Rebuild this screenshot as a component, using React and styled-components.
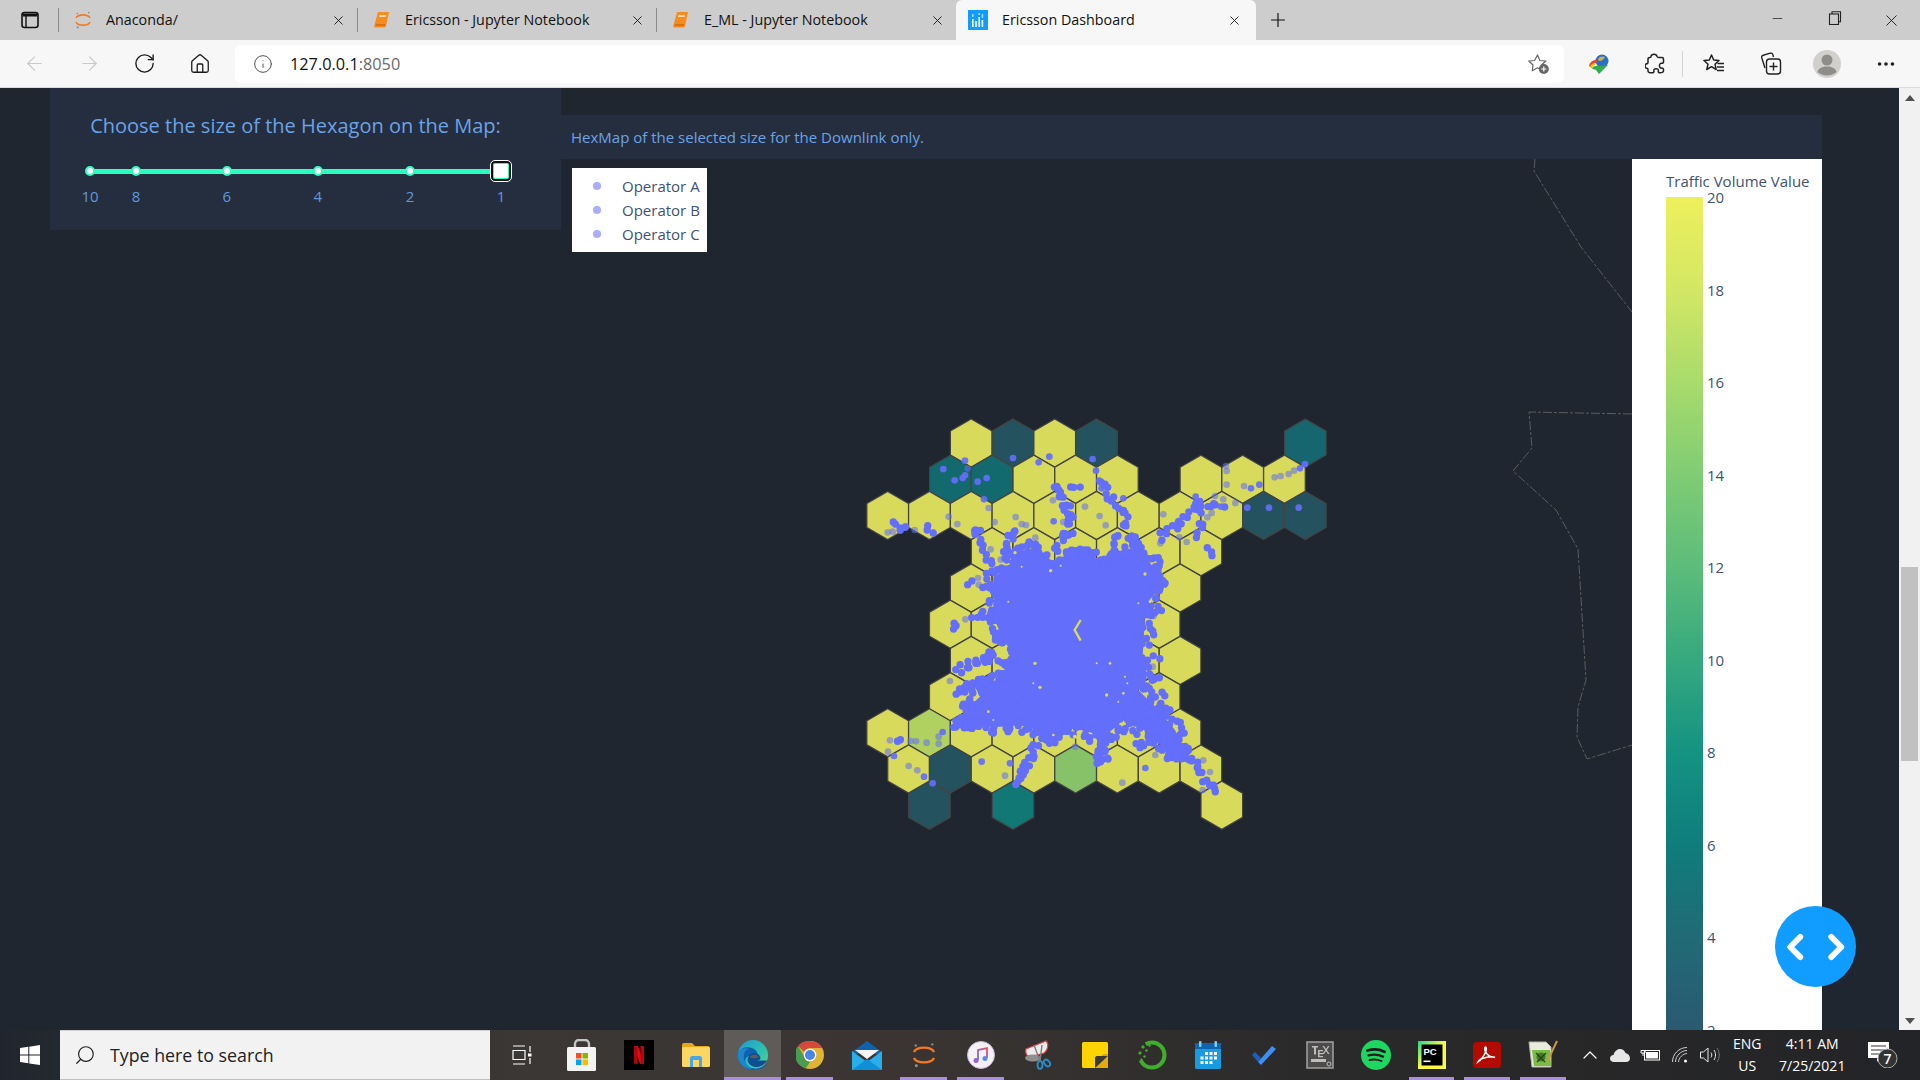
import React from "react"
import styled, { createGlobalStyle } from "styled-components"
import { ArrowLeft, ArrowRight, RotateCw, Home, Info, Plus, X, Minus, Search, ChevronUp, ChevronLeft, ChevronRight, MoreHorizontal } from "lucide-react"

const Global = createGlobalStyle`
  html, body {
    margin: 0;
    height: 100%;
    overflow: hidden;
    background: #1f2630;
  }
  * {
    box-sizing: border-box;
  }
`

const Screen = styled.div`
  width: 1920px;
  height: 1080px;
  display: flex;
  flex-direction: column;
  font-family: "Open Sans", sans-serif;
`

/* browser chrome */
const TabBar = styled.div`
  height: 40px;
  flex: none;
  display: flex;
  align-items: center;
  background: #cdcdcd;
  color: #111;
  font-size: 14.3px;
`
const SideToggle = styled.div`
  width: 59px;
  height: 24px;
  padding-left: 2px;
  display: flex;
  align-items: center;
  justify-content: center;
  border-right: 1px solid #8b8b8b;
`
const Tab = styled.div`
  width: ${(p) => (p.$active ? "300px" : "299px")};
  height: ${(p) => (p.$active ? "40px" : "24px")};
  padding: 0 ${(p) => (p.$active ? "14px" : "11px")} 0 ${(p) => (p.$active ? "12px" : "15px")};
  display: flex;
  align-items: center;
  gap: 14px;
  background: ${(p) => (p.$active ? "#f7f7f7" : "transparent")};
  border-right: ${(p) => (p.$last || p.$active ? "none" : "1px solid #8b8b8b")};
  border-radius: ${(p) => (p.$active ? "6px 6px 0 0" : "0")};
  span {
    flex: 1;
    white-space: nowrap;
    position: relative;
    top: -1px;
  }
`
const NewTab = styled.div`
  width: 44px;
  display: flex;
  justify-content: center;
`
const WindowButtons = styled.div`
  margin-left: auto;
  display: flex;
`
const WindowButton = styled.div`
  width: 57px;
  display: flex;
  justify-content: center;
`
const Toolbar = styled.div`
  height: 48px;
  flex: none;
  display: flex;
  align-items: center;
  background: #f7f7f7;
  border-bottom: 1px solid #dcdcdc;
  padding-left: 7px;
`
const NavButton = styled.div`
  width: 55px;
  display: flex;
  justify-content: center;
  color: ${(p) => (p.$off ? "#c9c9c9" : "#1a1a1a")};
`
const AddressBar = styled.div`
  width: 1329px;
  height: 38px;
  margin-left: 8px;
  padding: 0 14px 0 18px;
  display: flex;
  align-items: center;
  gap: 17px;
  background: #fff;
  border-radius: 6px;
  font-size: 16.3px;
  color: #111;
  i {
    font-style: normal;
    color: #6b6b6b;
  }
  svg:last-child {
    margin-left: auto;
  }
`
const ToolIcons = styled.div`
  display: flex;
  align-items: center;
  margin-left: 6px;
`
const ToolIcon = styled.div`
  width: ${(p) => p.$w || 57}px;
  display: flex;
  justify-content: center;
  align-items: center;
`
const ToolDivider = styled.div`
  width: 1px;
  height: 26px;
  background: #d4d4d4;
`

/* page */
const Viewport = styled.div`
  flex: 1;
  min-height: 0;
  display: flex;
  overflow: hidden;
  background: #1f2630;
`
const Page = styled.div`
  flex: 1;
  min-width: 0;
  display: flex;
  align-items: flex-start;
  padding-left: 50px;
`
const SliderCard = styled.section`
  width: 511px;
  height: 142px;
  flex: none;
  padding: 23px 60px 0 40px;
  background: #252e3f;
  color: #6ba3e6;
`
const SliderTitle = styled.h3`
  margin: 0;
  font-size: 20px;
  font-weight: 400;
  line-height: 30px;
  white-space: nowrap;
  text-align: center;
`
const Slider = styled.div`
  position: relative;
  height: 5px;
  margin-top: 28px;
  background: #2bffc0;
`
const SliderDot = styled.div`
  position: absolute;
  top: -3px;
  left: ${(p) => p.$at}%;
  width: 10px;
  height: 10px;
  margin-left: -5px;
  background: #fff;
  border: 2px solid #2bffc0;
  border-radius: 50%;
`
const SliderHandle = styled.div`
  position: absolute;
  top: -8px;
  right: -10px;
  width: 20px;
  height: 20px;
  background: #fff;
  border: 2px solid #111;
  outline: 1px solid #fff;
  border-radius: 4px;
  box-shadow: inset 0 0 0 1px #2bffc0;
`
const SliderMark = styled.div`
  position: absolute;
  top: 17px;
  left: ${(p) => p.$at}%;
  transform: translateX(-50%);
  font-size: 15px;
  line-height: 20px;
  color: #5f98da;
`
const MapColumn = styled.main`
  width: 1261px;
  height: 100%;
  flex: none;
  display: flex;
  flex-direction: column;
  padding-top: 27px;
`
const Banner = styled.div`
  height: 44px;
  flex: none;
  display: flex;
  align-items: center;
  padding-left: 10px;
  background: #252e3f;
  color: #6ba3e6;
  font-size: 15px;
`
const Plot = styled.div`
  position: relative;
  flex: 1;
  min-height: 0;
  display: flex;
`
const MapSvg = styled.svg`
  flex: 1;
  min-width: 0;
  height: 100%;
  display: block;
`
const Legend = styled.div`
  position: absolute;
  left: 11px;
  top: 9px;
  width: 135px;
  height: 84px;
  padding-top: 6px;
  background: #fff;
  color: #3f5273;
  font-size: 15px;
`
const LegendRow = styled.div`
  height: 24px;
  display: flex;
  align-items: center;
  padding-left: 21px;
  gap: 21px;
  &::before {
    content: "";
    width: 8px;
    height: 8px;
    border-radius: 50%;
    background: #a8aefc;
  }
`
const ColorBarPanel = styled.aside`
  width: 190px;
  flex: none;
  padding: 12px 0 0 34px;
  background: #fff;
  color: #3f5273;
  font-size: 15px;
`
const ColorTitle = styled.div`
  line-height: 20px;
  white-space: nowrap;
  margin-bottom: 6px;
`
const ColorBody = styled.div`
  display: flex;
  gap: 4px;
`
const ColorRamp = styled.div`
  width: 37px;
  height: 925px;
  flex: none;
  background: linear-gradient(180deg, #edf05c 0%, #d3e764 10%, #a8db6c 20%, #80cc74 30%, #5cbc7a 40%, #36a97f 50%, #149382 60%, #0f7d7c 70%, #216a76 80%, #2a5a70 90%, #2f4f6b 100%);
`
const Ticks = styled.div`
  display: flex;
  flex-direction: column;
  margin-top: -10px;
  div {
    height: 92.5px;
    line-height: 20px;
  }
`
const CodeButton = styled.button`
  position: absolute;
  right: -34px;
  bottom: 43px;
  width: 81px;
  height: 81px;
  display: flex;
  align-items: center;
  justify-content: center;
  padding: 0;
  border: none;
  border-radius: 50%;
  background: #119dff;
  color: #fff;
`
const ScrollTrack = styled.div`
  position: relative;
  width: 21px;
  flex: none;
  background: #f1f1f1;
`
const ScrollArrow = styled.div`
  position: absolute;
  left: 6px;
  ${(p) => (p.$down ? "bottom: 6px;" : "top: 7px;")}
  width: 0;
  height: 0;
  border-left: 5px solid transparent;
  border-right: 5px solid transparent;
  ${(p) => (p.$down ? "border-top: 6px solid #505050;" : "border-bottom: 6px solid #505050;")}
`
const ScrollThumb = styled.div`
  position: absolute;
  top: 479px;
  left: 2px;
  width: 17px;
  height: 194px;
  background: #c1c1c1;
`

/* taskbar */
const Taskbar = styled.footer`
  height: 50px;
  flex: none;
  display: flex;
  color: #fff;
  background: linear-gradient(90deg, #21262e 0, #3b3734 520px, #3a3533 900px, #2b2a2a 1300px, #232427 1920px);
`
const StartButton = styled.div`
  width: 60px;
  display: flex;
  align-items: center;
  justify-content: center;
`
const SearchBox = styled.div`
  width: 430px;
  display: flex;
  align-items: center;
  gap: 14px;
  padding-left: 14px;
  background: #f2f2f2;
  border-top: 1px solid #d0d0d0;
  border-bottom: 1px solid #c0c0c0;
  color: #222;
  font-size: 17.8px;
`
const TaskView = styled.div`
  width: 63px;
  display: flex;
  align-items: center;
  justify-content: center;
`
const AppStrip = styled.div`
  display: flex;
`
const AppSlot = styled.div`
  position: relative;
  width: ${(p) => (p.$narrow ? 55.9 : 57)}px;
  display: flex;
  align-items: center;
  justify-content: center;
  background: ${(p) => (p.$active ? "#5f5b59" : "transparent")};
  &::after {
    content: "";
    display: ${(p) => (p.$open ? "block" : "none")};
    position: absolute;
    bottom: 0;
    left: ${(p) => (p.$active ? 0 : 5)}px;
    right: ${(p) => (p.$active ? 0 : 5)}px;
    height: 3px;
    background: #a98fdc;
  }
`
const Tray = styled.div`
  margin-left: 4px;
  display: flex;
  align-items: stretch;
  flex: 1;
`
const TrayIcon = styled.div`
  width: 30px;
  display: flex;
  align-items: center;
  justify-content: center;
`
const TrayText = styled.div`
  width: ${(p) => p.$w}px;
  display: flex;
  flex-direction: column;
  align-items: center;
  justify-content: center;
  gap: 4px;
  font-size: 14px;
  line-height: 18px;
  white-space: nowrap;
`
const Notify = styled.div`
  flex: 1;
  display: flex;
  align-items: center;
  padding-left: 13px;
`

/* map data, in reference pixels of the crop at 3x */
const HEX_FILL = { y: "#d8da5b", d: "#24525f", t: "#126a6e", u: "#15666e", l: "#b0d060", g: "#88c268", v: "#127876" }
const HEX_ROWS = [
  "4y 6d 8y 10d 20u",
  "3t 5t 7y 9y 11y 15y 17y 19y",
  "0y 2y 4y 6y 8y 10y 12y 14y 16y 18d 20d",
  "5y 7y 9y 11y 13y 15y",
  "4y 6y 8y 10y 12y 14y",
  "3y 5y 7y 9y 11y 13y",
  "4y 6y 8y 10y 12y 14y",
  "3y 5y 7y 9y 11y 13y",
  "0y 2l 4y 6y 8y 10y 12y 14y",
  "1y 3d 5y 7y 9g 11y 13y 15y",
  "2d 6v 16y",
]

const hexPoints = (cx, cy, r = 72) =>
  [0, 60, 120, 180, 240, 300]
    .map((a) => {
      const t = ((a - 90) * Math.PI) / 180
      return `${(cx + r * Math.cos(t)).toFixed(1)},${(cy + r * Math.sin(t)).toFixed(1)}`
    })
    .join(" ")

const HEXES = HEX_ROWS.flatMap((row, i) =>
  row.split(" ").map((h) => ({
    x: 143 + 62.65 * parseInt(h, 10),
    y: 129 + 108.7 * i,
    fill: HEX_FILL[h.slice(-1)],
  }))
)

const BLOB = [
  [460, 530], [505, 505], [525, 445], [565, 455], [610, 475], [660, 485], [700, 460], [760, 475], [820, 475], [870, 445],
  [920, 475], [950, 515], [960, 565], [920, 610], [912, 700], [908, 770], [920, 830], [895, 870], [955, 930], [1005, 990],
  [1035, 1050], [990, 1070], [930, 1000], [850, 960], [805, 1000], [790, 1055], [760, 1000], [700, 985], [640, 1025],
  [590, 995], [560, 975], [480, 980], [350, 980], [375, 930], [420, 890], [405, 860], [500, 830], [525, 770], [490, 720],
  [460, 650], [460, 580],
]

// thin arms of dots that run out of the main mass
const ARMS = [
  [650, 255, 690, 350, 14], [690, 350, 670, 420, 8], [780, 240, 850, 345, 12], [850, 345, 880, 430, 9], [700, 270, 720, 265, 3],
  [520, 385, 490, 480, 14], [410, 395, 465, 520, 12], [575, 430, 620, 490, 12], [1090, 320, 960, 410, 16], [1070, 295, 1065, 320, 3],
  [1145, 320, 1085, 325, 7], [1090, 365, 1070, 405, 5], [880, 420, 920, 480, 12], [830, 400, 825, 470, 8], [945, 480, 970, 560, 8],
  [1125, 1178, 1030, 1050, 18], [535, 1150, 575, 1060, 14], [575, 1060, 620, 1000, 7], [350, 880, 450, 830, 16], [350, 810, 460, 770, 16],
  [395, 650, 470, 635, 8], [780, 1085, 790, 1000, 10], [760, 1080, 810, 1070, 5], [890, 1045, 940, 1010, 7], [340, 980, 420, 975, 8],
  [960, 625, 910, 640, 6], [955, 782, 925, 770, 3], [960, 830, 930, 850, 3], [970, 895, 930, 860, 4], [985, 930, 950, 910, 3],
  [1040, 1050, 985, 1085, 8], [450, 750, 440, 790, 6], [660, 410, 690, 400, 4], [700, 460, 720, 480, 3], [270, 390, 262, 385, 3],
  [180, 385, 195, 392, 3], [157, 366, 170, 362, 2], [400, 400, 420, 392, 3], [1105, 445, 1105, 462, 3], [335, 680, 352, 675, 3],
  [378, 547, 390, 547, 2], [430, 565, 445, 560, 2], [465, 710, 475, 710, 2], [945, 695, 945, 695, 2], [175, 1028, 182, 1026, 2],
  [640, 440, 720, 470, 8], [760, 470, 800, 480, 4], [860, 450, 900, 500, 6], [950, 520, 965, 540, 3], [450, 930, 560, 900, 12],
  [480, 780, 540, 800, 8], [850, 1000, 930, 960, 6],
]

// single dots, strong ones and the faint ones over a hex
const STRAY_SOLID = [
  [375, 182], [519, 174], [596, 187], [628, 170], [758, 177], [432, 298], [850, 295], [1258, 254], [1395, 192], [1380, 205], [1143, 320],
  [310, 207], [344, 241], [368, 234], [375, 226], [413, 245], [440, 234], [1287, 323], [1376, 323], [1222, 323], [1233, 265], [308, 996],
  [162, 1068], [252, 1130], [278, 1150], [425, 1085], [510, 1090], [916, 1104], [768, 212], [778, 242], [785, 265], [1067, 290], [641, 364],
]
const STRAY_FAINT = [
  [383, 205], [446, 324], [326, 350], [352, 372], [143, 397], [158, 395], [197, 378], [224, 390], [527, 351], [464, 366], [545, 372], [558, 375],
  [639, 301], [670, 366], [735, 320], [779, 348], [797, 376], [970, 343], [1102, 352], [1115, 339], [1186, 309], [1160, 254], [1160, 213], [1158, 198],
  [1212, 258], [1304, 232], [1322, 228], [1346, 222], [1362, 212], [1150, 298], [1125, 288], [1040, 426], [1018, 412], [961, 430], [586, 413],
  [452, 448], [428, 443], [482, 479], [414, 534], [416, 554], [376, 658], [150, 1021], [144, 1055], [212, 1023], [228, 1024], [260, 1028], [296, 1010],
  [296, 1031], [206, 1098], [232, 1111], [495, 1127], [847, 1148], [946, 1065], [1090, 1081], [1110, 1116], [1088, 1170], [330, 843], [545, 864],
  [938, 800], [941, 648], [706, 1040],
]

// bits of hex that still show through the mass of dots
const GAPS = [
  [525, 458, 5], [632, 512, 5], [662, 497, 3], [915, 522, 5], [505, 605, 3], [600, 862, 5], [580, 850, 3], [445, 935, 4], [850, 880, 4],
  [835, 905, 3], [862, 850, 3], [770, 790, 3], [810, 790, 4], [585, 790, 5], [800, 885, 5], [855, 830, 3], [460, 960, 3], [640, 1005, 4],
  [705, 1010, 6], [930, 605, 4], [895, 610, 3], [490, 770, 4], [545, 500, 3],
]

const seeded = (seed) => () => {
  seed = (seed * 16807) % 2147483647
  return seed / 2147483647
}

const buildDots = () => {
  const rnd = seeded(4711)
  const dots = []
  BLOB.forEach(([x, y], i) => {
    const [nx, ny] = BLOB[(i + 1) % BLOB.length]
    const steps = Math.ceil(Math.hypot(nx - x, ny - y) / 8)
    for (let s = 0; s < steps; s++) {
      const t = s / steps
      dots.push([x + (nx - x) * t + (rnd() - 0.5) * 42, y + (ny - y) * t + (rnd() - 0.5) * 42])
    }
  })
  ARMS.forEach(([x, y, nx, ny, n]) => {
    for (let s = 0; s < n; s++) {
      const t = n > 1 ? s / (n - 1) : 0
      dots.push([x + (nx - x) * t + (rnd() - 0.5) * 22, y + (ny - y) * t + (rnd() - 0.5) * 22])
    }
  })
  return dots
}
const DOTS = buildDots()
const BLOB_PATH = BLOB.map(([x, y]) => `${x},${y}`).join(" ")

const HexMap = () => (
  <MapSvg viewBox="561 159 1071 871" preserveAspectRatio="xMinYMin slice">
    <g fill="none" stroke="#5c5c5c" strokeWidth="1" strokeDasharray="9 2 3 2">
      <path d="M1535 159L1534 171L1581 247L1632 312" />
      <path d="M1632 414L1529 412L1532 448L1513 471L1556 510L1578 549L1586 680L1578 707L1577 737L1587 759L1632 745" />
    </g>
    <g transform="translate(840 400) scale(0.33333)">
      <g stroke="#444" strokeWidth="3.5">
        {HEXES.map((h) => (
          <polygon key={`${h.x}-${h.y}`} points={hexPoints(h.x, h.y)} fill={h.fill} />
        ))}
      </g>
      <g fill="#636efa">
        <polygon points={BLOB_PATH} />
        {DOTS.map(([x, y], i) => (
          <circle key={i} cx={x} cy={y} r="11" />
        ))}
        {STRAY_SOLID.map(([x, y]) => (
          <circle key={`${x}-${y}`} cx={x} cy={y} r="10" opacity="0.92" />
        ))}
        {STRAY_FAINT.map(([x, y]) => (
          <circle key={`${x}-${y}`} cx={x} cy={y} r="10" opacity="0.55" />
        ))}
      </g>
      <path d="M722 660L704 690L722 722" fill="none" stroke="#d8da5b" strokeWidth="7" />
      <g fill="#d8da5b">
        {GAPS.map(([x, y, r]) => (
          <circle key={`${x}-${y}`} cx={x} cy={y} r={r} />
        ))}
      </g>
    </g>
  </MapSvg>
)

/* icons */
const SidebarIcon = () => (
  <svg width="18" height="18" viewBox="0 0 18 18">
    <rect x="1" y="1.5" width="16" height="15" rx="2.5" fill="none" stroke="#111" strokeWidth="1.6" />
    <path d="M2 2.5h14v3H2z" fill="#111" />
    <path d="M5 5v11" stroke="#111" strokeWidth="1.4" />
  </svg>
)
const AnacondaIcon = ({ size = 22 }) => (
  <svg width={size} height={size} viewBox="0 0 22 22" fill="none">
    <path d="M2.5 8.5C5 3.5 17 3.5 19.5 8.5" stroke="#f47a20" strokeWidth="2" />
    <path d="M2.5 13.5C5 18.5 17 18.5 19.5 13.5" stroke="#f47a20" strokeWidth="2" />
    <circle cx="4" cy="3" r="1" fill="#8b8b8b" />
    <circle cx="18" cy="2" r="1" fill="#8b8b8b" />
    <circle cx="4.5" cy="20" r="1.3" fill="#8b8b8b" />
  </svg>
)
const NotebookIcon = () => (
  <svg width="18" height="18" viewBox="0 0 18 18">
    <path d="M5 1h11l-3 14c-.2.8-.8 1.5-1.8 1.5H2.5C1.5 16.5 1 15.8 1.2 15z" fill="#f78c1e" />
    <path d="M6.5 4h6.5l-.5 2H6z" fill="#ffd9a8" />
    <path d="M2.8 14h9.5" stroke="#b65a06" strokeWidth="1" />
  </svg>
)
const DashIcon = () => (
  <svg width="20" height="20" viewBox="0 0 20 20">
    <rect width="20" height="20" fill="#119dff" />
    <g fill="#fff">
      <rect x="4" y="9" width="1.6" height="8" />
      <rect x="7.2" y="11" width="1.6" height="6" />
      <rect x="10.4" y="7" width="1.6" height="10" />
      <rect x="13.6" y="10" width="1.6" height="7" />
      <rect x="4" y="4" width="1.6" height="3" opacity=".6" />
      <rect x="10.4" y="3" width="1.6" height="2" opacity=".6" />
      <rect x="13.6" y="4" width="1.6" height="4" opacity=".6" />
    </g>
  </svg>
)
const RestoreIcon = () => (
  <svg width="14" height="14" viewBox="0 0 14 14" fill="none" stroke="#222" strokeWidth="1.1">
    <rect x="1.5" y="3" width="9" height="10.5" />
    <path d="M4 3V.7h8.5v10H10.5" />
  </svg>
)
const StarAddIcon = () => (
  <svg width="22" height="22" viewBox="0 0 22 22" fill="none">
    <path d="M9.5 2l2.4 5.500 6 .5-4.500 4 1.300 5.800-5.200-3-5.200 3L5 12 .8 8l5.800-.5z" stroke="#666" strokeWidth="1.2" strokeLinejoin="round" />
    <circle cx="15.8" cy="16" r="5" fill="#666" />
    <path d="M13.3 16h5M15.8 13.5v5" stroke="#fff" strokeWidth="1.2" />
  </svg>
)
const IdmIcon = () => (
  <svg width="22" height="22" viewBox="0 0 22 22">
    <circle cx="14" cy="8" r="6.5" fill="#2a6fc4" />
    <path d="M10 6c2-3 5-3 7-2-1 2-3 4-6 4z" fill="#d9b23a" />
    <path d="M1 13c1-5 6-7 9-6l-2 3c-2 0-4 2-4 5z" fill="#e44a2c" />
    <path d="M2 14c1-3 3-4 6-4l-1 2c-1 0-2 1-2 3z" fill="#f5c518" />
    <path d="M4 16c1-3 4-4 8-3l8-1-5 5-4 4-3-4c-2-1-3-1-4-1z" fill="#34a853" />
  </svg>
)
const PuzzleIcon = () => (
  <svg width="20" height="22" viewBox="0 0 20 22" fill="none" stroke="#222" strokeWidth="1.5" strokeLinejoin="round">
    <path d="M6 3.5c.5-3 5.500-3 6 0 .1.800 1 1 2 1h3c1 0 1.500.5 1.500 1.500v3c0 1-1 1.500-1.800 1.300-3-.6-3 5.400 0 4.800.8-.2 1.800.3 1.800 1.300V18c0 1-2 2-4 1.700-1-.2-1.500-1-1.200-1.800.8-3-5.200-3-4.400 0 .3.800-.2 1.600-1.200 1.800C6 20 3 20 3 18v-1.500c0-1-1-1.500-1.800-1.300-1.500-1-1.500-3.400 0-4.400.8.200 1.800-.3 1.800-1.300V6c0-1 1-1.500 2-1.500.5 0 1-.3 1-1z" />
  </svg>
)
const FavoritesIcon = () => (
  <svg width="22" height="22" viewBox="0 0 22 22" fill="none" stroke="#222" strokeWidth="1.5" strokeLinejoin="round">
    <path d="M8.5 2l2.200 5 5.300.5-4 3.700 1.200 5.300-4.700-2.800-4.700 2.800 1.200-5.300-4-3.700 5.300-.5z" />
    <path d="M14.5 10.5h6.500M14 14h7M14 17.5h7" />
  </svg>
)
const CollectionsIcon = () => (
  <svg width="22" height="24" viewBox="0 0 22 24" fill="none" stroke="#222" strokeWidth="1.4">
    <path d="M5 16L1.800 6C1.400 4.600 2 3.500 3.200 3.200l7-2c1.200-.3 2.300.2 2.700 1.400L13.500 5" />
    <rect x="6.5" y="7" width="14" height="15" rx="3" />
    <path d="M13.5 10.5v8M9.5 14.5h8" />
  </svg>
)
const AvatarIcon = () => (
  <svg width="28" height="28" viewBox="0 0 28 28">
    <circle cx="14" cy="14" r="14" fill="#d2d0cd" />
    <circle cx="14" cy="10" r="5.5" fill="#8f8d8a" />
    <path d="M4.5 22c1-4 5-5.500 9.500-5.500s8.500 1.500 9.500 5.500c-5 4.500-14 4.500-19 0z" fill="#8f8d8a" />
  </svg>
)
const WindowsLogo = () => (
  <svg width="20" height="20" viewBox="0 0 20 20" fill="#fff">
    <path d="M0 3l8.300-1.200v7.700H0zM9.300 1.700L20 0v9.500H9.300zM0 10.500h8.300v7.700L0 17zM9.300 10.500H20V20L9.300 18.400z" />
  </svg>
)
const TaskViewIcon = () => (
  <svg width="20" height="20" viewBox="0 0 20 20" fill="none" stroke="#fff" strokeWidth="1.2">
    <path d="M1 1h12M1 19h12M1 5.500h12v9H1zM18 1v6M18 13v6" />
    <rect x="16" y="8.5" width="3.5" height="3" fill="#fff" stroke="none" />
  </svg>
)
const StoreIcon = () => (
  <svg width="30" height="32" viewBox="0 0 30 32">
    <path d="M8 9V5c0-2 1.500-4 4-4h6c2.500 0 4 2 4 4v4" fill="none" stroke="#c4c4c4" strokeWidth="2.4" />
    <rect y="8" width="29" height="24" rx="1.5" fill="#f3f3f3" />
    <rect x="9" y="14" width="5.5" height="5.5" fill="#f25022" />
    <rect x="15.5" y="14" width="5.5" height="5.5" fill="#7fba00" />
    <rect x="9" y="20.5" width="5.5" height="5.5" fill="#00a4ef" />
    <rect x="15.5" y="20.5" width="5.5" height="5.5" fill="#ffb900" />
  </svg>
)
const NetflixIcon = () => (
  <svg width="30" height="30" viewBox="0 0 30 30">
    <rect width="30" height="30" fill="#000" />
    <path d="M10 6h4l6 18h-4z" fill="#e50914" />
    <path d="M10 6h3.500v18l-3.500-.4zM16.500 6H20v18.400l-3.500-.6z" fill="#b1060f" />
  </svg>
)
const ExplorerIcon = () => (
  <svg width="28" height="24" viewBox="0 0 28 24">
    <path d="M0 2c0-1 .6-2 2-2h8l3 3h13c1 0 2 1 2 2v4H0z" fill="#e6a819" />
    <rect y="4" width="28" height="20" rx="1.5" fill="#fbd663" />
    <path d="M8 24v-9c0-1 .8-2 2-2h8c1.200 0 2 1 2 2v9h-3v-7h-6v7z" fill="#4aa5e6" />
  </svg>
)
const EdgeIcon = () => (
  <svg width="30" height="30" viewBox="0 0 30 30">
    <defs>
      <linearGradient id="edgeTop" x1="0" y1="0" x2="1" y2="1">
        <stop offset="0" stopColor="#1a9ad6" />
        <stop offset="0.7" stopColor="#35c9a5" />
        <stop offset="1" stopColor="#6fe05c" />
      </linearGradient>
    </defs>
    <circle cx="15" cy="15" r="15" fill="url(#edgeTop)" />
    <path d="M0 15C1 8 8 6 14 8c5 2 7 6 4 9-3 2-7 1-7-1-5 1-5 8 0 11 5 2.500 12 2 18-3-3 5-8 6-14 6C6 30 0 23 0 15z" fill="#0d62ab" />
    <path d="M11 16c2-4 9-4 11 .5 1 2 0 4-3 4h10c-2 4-8 8-14 6-5-2-7-7-4-10.500z" fill="#0f4e92" />
    <path d="M12 17c2-3 7-3 9 0-2 1-7 2-9 0z" fill="#5f5b59" />
    <path d="M0 15c0-6 7-8 11-6-4 1-6 5-5 10 1 4 4 7 8 10C6 29 0 23 0 15z" fill="#1b87d0" />
  </svg>
)
const ChromeIcon = () => (
  <svg width="28" height="28" viewBox="0 0 28 28">
    <circle cx="14" cy="14" r="14" fill="#e0b332" />
    <path d="M14 0a14 14 0 0 1 12.100 7H14a7 7 0 0 0-6.100 3.500L2 4.900A14 14 0 0 1 14 0z" fill="#d5493c" />
    <path d="M2 4.900l5.900 10.200A7 7 0 0 0 14 21l-4.200 6.300A14 14 0 0 1 2 4.900z" fill="#4a9c52" />
    <circle cx="14" cy="14" r="6.3" fill="#fff" />
    <circle cx="14" cy="14" r="5" fill="#4a86e8" />
  </svg>
)
const MailIcon = () => (
  <svg width="30" height="29" viewBox="0 0 30 29">
    <path d="M0 11L15 0l15 11v2H0z" fill="#0f62ae" />
    <path d="M3 9h24l-12 9z" fill="#f4f4f4" />
    <path d="M0 10l15 11 15-11v19H0z" fill="#28afea" />
    <path d="M0 29l15-11 15 11z" fill="#0f8fd8" />
  </svg>
)
const MusicIcon = () => (
  <svg width="28" height="28" viewBox="0 0 28 28">
    <defs>
      <linearGradient id="musicNote" x1="1" y1="0" x2="0" y2="1">
        <stop offset="0" stopColor="#f3496c" />
        <stop offset="1" stopColor="#5f7ae0" />
      </linearGradient>
    </defs>
    <circle cx="14" cy="14" r="13.5" fill="#f4f0f4" stroke="#c9b7d6" />
    <path d="M11 19V9l9-2v10" fill="none" stroke="url(#musicNote)" strokeWidth="1.8" />
    <circle cx="9" cy="19.5" r="2.5" fill="#9a5fd0" />
    <circle cx="18" cy="17.5" r="2.5" fill="#5f8ae0" />
  </svg>
)
const SnipIcon = () => (
  <svg width="28" height="30" viewBox="0 0 28 30" fill="none">
    <path d="M2 9L22 1c3 3 2 9-2 12L6 17C2 16 1 12 2 9z" fill="#ececec" stroke="#d8494a" strokeWidth="1.2" />
    <ellipse cx="9" cy="18" rx="8" ry="3.5" fill="#8e8e8e" />
    <path d="M10 5l6 16M18 5l-2 16" stroke="#7e7e7e" strokeWidth="1.4" />
    <ellipse cx="16" cy="25" rx="2.5" ry="3.8" stroke="#2b8ecb" strokeWidth="1.8" />
    <ellipse cx="23" cy="23" rx="2.5" ry="3.8" stroke="#2b8ecb" strokeWidth="1.8" transform="rotate(-40 23 23)" />
  </svg>
)
const StickyIcon = () => (
  <svg width="26" height="26" viewBox="0 0 26 26">
    <rect width="26" height="26" rx="1.5" fill="#ffd400" />
    <path d="M26 12v12.500c0 1-.6 1.500-1.500 1.500H13V21l8-9z" fill="#d9a90a" />
    <path d="M13 26V16c0-1 .6-2 2-2h11L13 26z" fill="#3b3a37" />
    <path d="M15 26l11-12v10.500c0 1-.6 1.500-1.500 1.500z" fill="#e7ad07" />
  </svg>
)
const RingIcon = () => (
  <svg width="30" height="30" viewBox="0 0 30 30" fill="none">
    <circle cx="15" cy="15" r="12.5" stroke="#3fae2a" strokeWidth="4" strokeDasharray="60 18.5" strokeDashoffset="-52" />
    <path d="M6 5l2 2-2 2-2-2zM3 11l2 2-2 2-2-2zM9 9l2 1-1 2-2-1zM4 18l2 2-2 1-1-1zM8 15l1 2-2 1-1-2zM12 4l2 1-1 2-2-1z" fill="#3fae2a" />
  </svg>
)
const CalendarIcon = () => (
  <svg width="26" height="28" viewBox="0 0 26 28">
    <rect y="2" width="26" height="26" rx="1.5" fill="#199be2" />
    <path d="M0 3.5C0 2.600.6 2 1.500 2h23c.9 0 1.500.6 1.500 1.500V8H0z" fill="#0f64b0" />
    <rect x="4" y="0" width="2.5" height="6" rx="1" fill="#7bd0f5" />
    <rect x="19.5" y="0" width="2.5" height="6" rx="1" fill="#7bd0f5" />
    <path d="M10 11h3v3h-3zM14.500 11h3v3h-3zM19 11h3v3h-3zM5.500 15.500h3v3h-3zM10 15.500h3v3h-3zM14.500 15.500h3v3h-3zM19 15.500h3v3h-3zM5.500 20h3v3h-3zM10 20h3v3h-3zM14.500 20h3v3h-3z" fill="#fff" />
  </svg>
)
const TodoIcon = () => (
  <svg width="24" height="20" viewBox="0 0 24 20">
    <path d="M0 10l3-3 6 6-3 4z" fill="#1c5dc0" />
    <path d="M6 17L20 1l4 3L9 20z" fill="#3f8ff0" />
  </svg>
)
const TexIcon = () => (
  <svg width="28" height="28" viewBox="0 0 28 28">
    <rect x="1" y="1" width="26" height="26" fill="#4d4c4b" stroke="#9c9c9c" strokeWidth="1.6" />
    <path d="M6 5h6v1.600h-2v7H8v-7H6zM12 9h5v1.300h-3.500V12H17v1.300h-3.500V15H17v1.300h-5zM18 5l2 3 2-3h1.500l-2.700 4 2.700 4H22l-2-3-2 3h-1.500l2.700-4L16.500 5z" fill="#bdbdbd" />
    <rect x="5" y="18" width="15" height="3" fill="#bdbdbd" />
    <circle cx="23" cy="23" r="2" fill="none" stroke="#bdbdbd" />
  </svg>
)
const SpotifyIcon = () => (
  <svg width="30" height="30" viewBox="0 0 30 30" fill="none" stroke="#1b1b1b" strokeLinecap="round">
    <circle cx="15" cy="15" r="15" fill="#1ed760" stroke="none" />
    <path d="M6.500 10.500c6-1.700 12-1.200 17 1.300" strokeWidth="2.8" />
    <path d="M7.500 15.300c5-1.300 10-.9 14.500 1.300" strokeWidth="2.3" />
    <path d="M8.500 20c4-1 8-.7 12 1" strokeWidth="1.9" />
  </svg>
)
const PycharmIcon = () => (
  <svg width="28" height="28" viewBox="0 0 28 28">
    <defs>
      <linearGradient id="pcEdge" x1="0" y1="0" x2="1" y2="1">
        <stop offset="0" stopColor="#21d789" />
        <stop offset="0.5" stopColor="#fcf84a" />
        <stop offset="1" stopColor="#fcf84a" />
      </linearGradient>
    </defs>
    <rect width="28" height="28" fill="url(#pcEdge)" />
    <rect x="3.5" y="3.5" width="21" height="21" fill="#000" />
    <text x="5.5" y="13.5" fontFamily="Liberation Sans, sans-serif" fontSize="9.5" fontWeight="700" fill="#fff">PC</text>
    <rect x="5.5" y="19.5" width="7" height="1.6" fill="#fff" />
  </svg>
)
const AcrobatIcon = () => (
  <svg width="28" height="26" viewBox="0 0 28 26">
    <rect width="28" height="26" rx="4" fill="#b30b00" />
    <path d="M5 20c3-2 6-6 8-11 .5-2 .5-4-.5-4s-1 2-.3 4c1.500 4 4 6 9.800 6.500-2-1.200-7-.7-11 .5C8 16.500 6 18 5 20z" fill="none" stroke="#fff" strokeWidth="1.5" />
  </svg>
)
const NotepadIcon = () => (
  <svg width="30" height="30" viewBox="0 0 30 30">
    <path d="M1 2h17l5 5v20H4z" fill="#e9ecdc" stroke="#b4b6a8" />
    <path d="M4 10h18l1 16H6z" fill="#7cbb45" />
    <circle cx="13" cy="17" r="4.5" fill="#3f7a2c" />
    <path d="M8 13l9 9M18 13l-9 9" stroke="#24421a" strokeWidth="1.3" />
    <path d="M29 1L19 22" stroke="#c99a3f" strokeWidth="2" />
  </svg>
)
const CloudIcon = () => (
  <svg width="20" height="13" viewBox="0 0 20 13" fill="#e6e6e6">
    <path d="M4 13C1.500 13 0 11.500 0 9.500S1.500 6 3.500 6C4.500 2.500 7 0 10 0c2.500 0 4.500 1.500 5.500 4C18 4.500 20 6.500 20 9.500c0 2-1.500 3.500-4 3.500z" />
  </svg>
)
const BatteryIcon = () => (
  <svg width="20" height="14" viewBox="0 0 20 14" fill="none" stroke="#fff">
    <rect x="4.5" y="2.5" width="15" height="9.5" />
    <rect x="6" y="4" width="12" height="6.5" fill="#fff" stroke="none" />
    <path d="M1 2.500h4v2.500H1zM3 5v3" />
  </svg>
)
const WifiIcon = () => (
  <svg width="16" height="16" viewBox="0 0 16 16" fill="none" stroke="#cfcfcf" strokeWidth="1">
    <path d="M.5 15C.5 7 7 .5 15 .5M3.500 15C3.500 9 9 3.500 15 3.500M6.500 15C6.500 11 11 6.500 15 6.500" />
    <circle cx="13.5" cy="14" r="1.5" fill="#fff" stroke="none" />
  </svg>
)
const SpeakerIcon = () => (
  <svg width="20" height="16" viewBox="0 0 20 16" fill="none" stroke="#e6e6e6" strokeWidth="1">
    <path d="M.5 5h3L8 1v14l-4.500-4h-3z" />
    <path d="M11 5.500c1 1.500 1 3.500 0 5M14 3c2 3 2 7 0 10" />
    <path d="M17 1c3 4 3 10 0 14" stroke="#777" />
  </svg>
)
const NotifyIcon = () => (
  <svg width="30" height="26" viewBox="0 0 30 26">
    <path d="M0 0h21v16H12l-3 4v-4H0z" fill="#fff" />
    <path d="M3 4h15M3 8h15M3 12h11" stroke="#333" strokeWidth="1.1" />
    <circle cx="19.5" cy="16.5" r="9.5" fill="#333" stroke="#aaa" />
    <text x="19.5" y="21.5" textAnchor="middle" fontFamily="Open Sans, sans-serif" fontSize="14" fontWeight="600" fill="#fff">7</text>
  </svg>
)

const TABS = [
  { title: "Anaconda/", icon: <AnacondaIcon size={18} /> },
  { title: "Ericsson - Jupyter Notebook", icon: <NotebookIcon /> },
  { title: "E_ML - Jupyter Notebook", icon: <NotebookIcon />, last: true },
  { title: "Ericsson Dashboard", icon: <DashIcon />, active: true },
]

const MARKS = [
  { label: "10", at: 0 },
  { label: "8", at: 11.2 },
  { label: "6", at: 33.3 },
  { label: "4", at: 55.4 },
  { label: "2", at: 77.9 },
  { label: "1", at: 100 },
]

const APPS = [
  { icon: <StoreIcon /> },
  { icon: <NetflixIcon /> },
  { icon: <ExplorerIcon /> },
  { icon: <EdgeIcon />, open: true, active: true },
  { icon: <ChromeIcon />, open: true },
  { icon: <MailIcon /> },
  { icon: <AnacondaIcon size={26} />, open: true },
  { icon: <MusicIcon />, open: true },
  { icon: <SnipIcon /> },
  { icon: <StickyIcon /> },
  { icon: <RingIcon /> },
  { icon: <CalendarIcon />, narrow: true },
  { icon: <TodoIcon />, narrow: true },
  { icon: <TexIcon />, narrow: true },
  { icon: <SpotifyIcon />, narrow: true },
  { icon: <PycharmIcon />, open: true, narrow: true },
  { icon: <AcrobatIcon />, open: true, narrow: true },
  { icon: <NotepadIcon />, open: true, narrow: true },
]

const TICKS = [20, 18, 16, 14, 12, 10, 8, 6, 4, 2]

const App = () => (
  <Screen>
    <Global />
    <TabBar>
      <SideToggle>
        <SidebarIcon />
      </SideToggle>
      {TABS.map((t) => (
        <Tab key={t.title} $active={t.active} $last={t.last}>
          {t.icon}
          <span>{t.title}</span>
          <X size={15} strokeWidth={1.4} />
        </Tab>
      ))}
      <NewTab>
        <Plus size={22} strokeWidth={1.3} />
      </NewTab>
      <WindowButtons>
        <WindowButton>
          <Minus size={15} strokeWidth={1.1} />
        </WindowButton>
        <WindowButton>
          <RestoreIcon />
        </WindowButton>
        <WindowButton>
          <X size={19} strokeWidth={1.1} />
        </WindowButton>
      </WindowButtons>
    </TabBar>
    <Toolbar>
      <NavButton $off>
        <ArrowLeft size={23} strokeWidth={1.2} />
      </NavButton>
      <NavButton $off>
        <ArrowRight size={23} strokeWidth={1.2} />
      </NavButton>
      <NavButton>
        <RotateCw size={23} strokeWidth={1.4} />
      </NavButton>
      <NavButton>
        <Home size={22} strokeWidth={1.4} />
      </NavButton>
      <AddressBar>
        <Info size={20} strokeWidth={1.2} color="#555" />
        <span>
          127.0.0.1<i>:8050</i>
        </span>
        <StarAddIcon />
      </AddressBar>
      <ToolIcons>
        <ToolIcon $w={58}>
          <IdmIcon />
        </ToolIcon>
        <ToolIcon $w={54}>
          <PuzzleIcon />
        </ToolIcon>
        <ToolDivider />
        <ToolIcon $w={62}>
          <FavoritesIcon />
        </ToolIcon>
        <ToolIcon $w={51}>
          <CollectionsIcon />
        </ToolIcon>
        <ToolIcon $w={62}>
          <AvatarIcon />
        </ToolIcon>
        <ToolIcon $w={56}>
          <MoreHorizontal size={22} strokeWidth={2} color="#222" />
        </ToolIcon>
      </ToolIcons>
    </Toolbar>
    <Viewport>
      <Page>
        <SliderCard>
          <SliderTitle>Choose the size of the Hexagon on the Map:</SliderTitle>
          <Slider>
            {MARKS.slice(0, -1).map((m) => (
              <SliderDot key={m.label} $at={m.at} />
            ))}
            <SliderHandle />
            {MARKS.map((m) => (
              <SliderMark key={m.label} $at={m.at}>
                {m.label}
              </SliderMark>
            ))}
          </Slider>
        </SliderCard>
        <MapColumn>
          <Banner>HexMap of the selected size for the Downlink only.</Banner>
          <Plot>
            <HexMap />
            <Legend>
              <LegendRow>Operator A</LegendRow>
              <LegendRow>Operator B</LegendRow>
              <LegendRow>Operator C</LegendRow>
            </Legend>
            <ColorBarPanel>
              <ColorTitle>Traffic Volume Value</ColorTitle>
              <ColorBody>
                <ColorRamp />
                <Ticks>
                  {TICKS.map((t) => (
                    <div key={t}>{t}</div>
                  ))}
                </Ticks>
              </ColorBody>
            </ColorBarPanel>
            <CodeButton>
              <ChevronLeft size={42} strokeWidth={3.4} />
              <ChevronRight size={42} strokeWidth={3.4} />
            </CodeButton>
          </Plot>
        </MapColumn>
      </Page>
      <ScrollTrack>
        <ScrollArrow />
        <ScrollThumb />
        <ScrollArrow $down />
      </ScrollTrack>
    </Viewport>
    <Taskbar>
      <StartButton>
        <WindowsLogo />
      </StartButton>
      <SearchBox>
        <Search size={22} strokeWidth={1.3} style={{ transform: "scaleX(-1)" }} />
        Type here to search
      </SearchBox>
      <TaskView>
        <TaskViewIcon />
      </TaskView>
      <AppStrip>
        {APPS.map((a, i) => (
          <AppSlot key={i} $open={a.open} $active={a.active} $narrow={a.narrow}>
            {a.icon}
          </AppSlot>
        ))}
      </AppStrip>
      <Tray>
        <TrayIcon>
          <ChevronUp size={24} strokeWidth={1.2} />
        </TrayIcon>
        <TrayIcon>
          <CloudIcon />
        </TrayIcon>
        <TrayIcon>
          <BatteryIcon />
        </TrayIcon>
        <TrayIcon>
          <WifiIcon />
        </TrayIcon>
        <TrayIcon>
          <SpeakerIcon />
        </TrayIcon>
        <TrayText $w={44}>
          <span>ENG</span>
          <span>US</span>
        </TrayText>
        <TrayText $w={86}>
          <span>4:11 AM</span>
          <span>7/25/2021</span>
        </TrayText>
        <Notify>
          <NotifyIcon />
        </Notify>
      </Tray>
    </Taskbar>
  </Screen>
)

export default App
